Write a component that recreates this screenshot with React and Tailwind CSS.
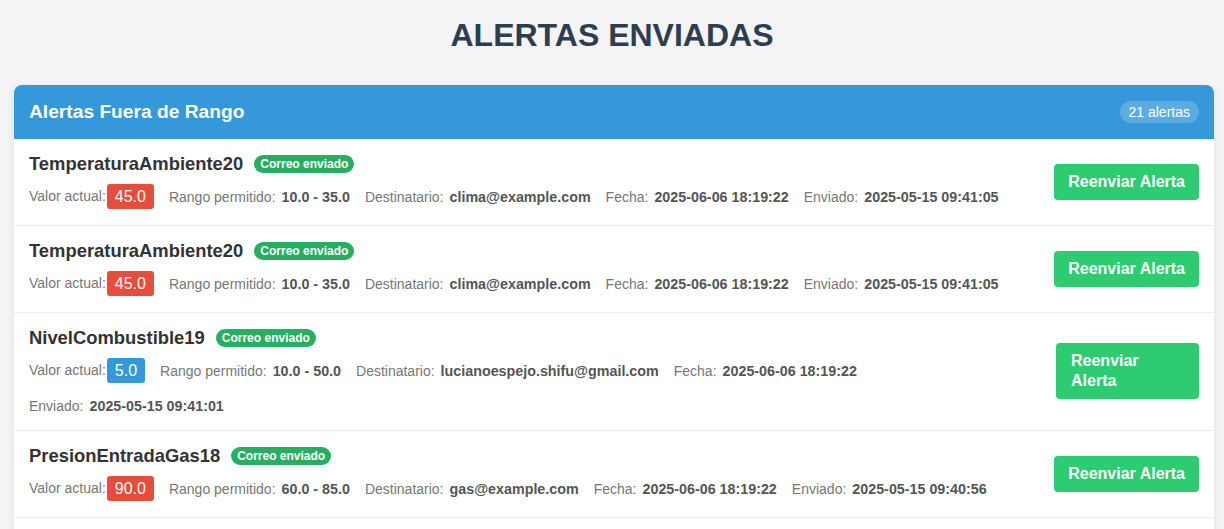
const alerts = [
  {
    name: "TemperaturaAmbiente20",
    value: "45.0",
    high: true,
    range: "10.0 - 35.0",
    to: "clima@example.com",
    date: "2025-06-06 18:19:22",
    sent: "2025-05-15 09:41:05",
  },
  {
    name: "TemperaturaAmbiente20",
    value: "45.0",
    high: true,
    range: "10.0 - 35.0",
    to: "clima@example.com",
    date: "2025-06-06 18:19:22",
    sent: "2025-05-15 09:41:05",
  },
  {
    name: "NivelCombustible19",
    value: "5.0",
    high: false,
    range: "10.0 - 50.0",
    to: "lucianoespejo.shifu@gmail.com",
    date: "2025-06-06 18:19:22",
    sent: "2025-05-15 09:41:01",
    narrow: true,
  },
  {
    name: "PresionEntradaGas18",
    value: "90.0",
    high: true,
    range: "60.0 - 85.0",
    to: "gas@example.com",
    date: "2025-06-06 18:19:22",
    sent: "2025-05-15 09:40:56",
  },
  {
    name: "PresionEntradaGas18",
    value: "90.0",
    high: true,
    range: "60.0 - 85.0",
    to: "gas@example.com",
    date: "2025-06-06 18:19:22",
    sent: "2025-05-15 09:40:56",
  },
];

function Detail({ label, value }) {
  return (
    <span className="text-[14px] leading-4 text-[#777]">
      {label}
      <strong className="ml-[6px] text-[14.3px] font-bold text-[#555]">{value}</strong>
    </span>
  );
}

function AlertRow({ a }) {
  return (
    <div className="flex items-center border-b border-[#eeeeee] px-[15px] pt-[15px] pb-4">
      <div className="min-w-0 flex-1">
        <div className="mb-[10px] flex items-center">
          <span className="text-[18.4px] font-bold leading-5 text-[#333]">{a.name}</span>
          <span className="ml-[11px] flex h-[18px] items-center rounded-full bg-[#27ae60] px-[6px] text-[12px] font-bold text-white">
            Correo enviado
          </span>
        </div>
        <div className="flex flex-wrap items-center gap-x-[15px] gap-y-[15px]">
          <span className="flex items-center text-[14px] text-[#777]">
            Valor actual:
            <span
              className={
                "ml-px flex h-[25px] items-center rounded-[3px] px-2 text-[16px] text-white " +
                (a.high ? "bg-[#e74c3c]" : "bg-[#3498db]")
              }
            >
              {a.value}
            </span>
          </span>
          <Detail label="Rango permitido:" value={a.range} />
          <Detail label="Destinatario:" value={a.to} />
          <Detail label="Fecha:" value={a.date} />
          <Detail label="Enviado:" value={a.sent} />
        </div>
      </div>
      <button
        className={
          "ml-4 shrink-0 rounded-[4px] bg-[#2ecc71] py-2 text-left text-[16px] font-bold leading-5 text-white " +
          (a.narrow ? "w-[143px] px-[15px]" : "whitespace-nowrap px-[14px]")
        }
      >
        Reenviar Alerta
      </button>
    </div>
  );
}

export default function App() {
  return (
    <div className="min-h-screen bg-[#f4f4f4] pt-[17px] font-['Liberation_Sans',Arial,sans-serif]">
      <h1 className="mb-[32px] text-center text-[32px] font-bold leading-[36px] text-[#2c3e50]">
        ALERTAS ENVIADAS
      </h1>
      <div className="ml-[14px] w-[1200px] overflow-hidden rounded-lg bg-white shadow-[0_2px_8px_rgba(0,0,0,0.08)]">
        <div className="flex items-center justify-between bg-[#3498db] px-[15px] py-4">
          <h2 className="text-[19.2px] font-bold leading-[22px] text-white">Alertas Fuera de Rango</h2>
          <span className="rounded-full bg-white/20 px-[9px] py-[3px] text-[14px] leading-4 text-white">
            21 alertas
          </span>
        </div>
        {alerts.map((a, i) => (
          <AlertRow key={i} a={a} />
        ))}
      </div>
    </div>
  );
}
